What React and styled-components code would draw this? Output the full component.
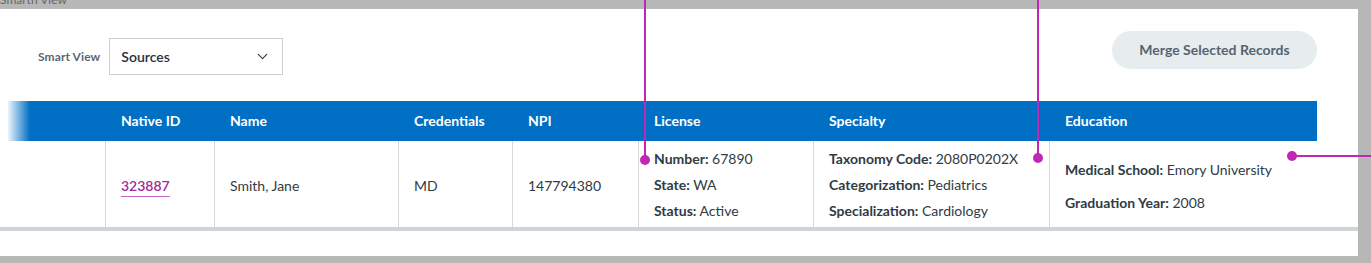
import React from 'react';
import styled, { createGlobalStyle } from 'styled-components';
import { ChevronDown } from 'lucide-react';

const Global = createGlobalStyle`
  html, body { margin: 0; padding: 0; background: #b7b7b7; }
  body {
    font-family: Lato, "Open Sans", "Liberation Sans", sans-serif;
    width: 1371px; height: 263px; overflow: hidden;
  }
  * { box-sizing: border-box; }
`;

const Stage = styled.div`
  position: relative;
  width: 1371px;
  height: 263px;
`;

const TopStrip = styled.div`
  height: 9px;
  overflow: hidden;
  color: #666;
  font-size: 12px;
  line-height: 12px;
`;

const Caption = styled.div`
  margin-top: -6px;
`;

const Panel = styled.div`
  width: 1358px;
  height: 247px;
  background: #fff;
`;

const Toolbar = styled.div`
  display: flex;
  justify-content: space-between;
  align-items: flex-start;
  height: 92px;
  padding: 22px 41px 0 38px;
`;

const ViewPicker = styled.div`
  display: flex;
  align-items: center;
  gap: 9px;
  margin-top: 7px;
`;

const PickerLabel = styled.span`
  font-size: 12px;
  font-weight: 700;
  color: #5b6771;
  letter-spacing: 0.1px;
`;

const Select = styled.div`
  width: 174px;
  height: 37px;
  border: 1px solid #c9d1d5;
  display: flex;
  align-items: center;
  justify-content: space-between;
  padding: 0 11px 1px 11px;
  font-size: 14px;
  font-weight: 600;
  color: #26313a;
`;

const MergeButton = styled.button`
  width: 205px;
  height: 38px;
  border: none;
  border-radius: 19px;
  background: #e7ecef;
  color: #56646f;
  font-family: inherit;
  font-size: 14px;
  font-weight: 700;
  padding: 0 0 2px;
`;

const cols = '105px 109px 184px 114px 126px 175px 236px 268px';

const Table = styled.div`
  border-bottom: 4px solid #cdd5d8;
`;

const HeadRow = styled.div`
  display: grid;
  grid-template-columns: ${cols};
  width: 1317px;
  height: 40px;
  background: linear-gradient(90deg, #fff 0, #fff 8px, rgba(0, 111, 196, 0.08) 8px, #006fc4 30px, #006fc4 100%);
`;

const HeadCell = styled.div`
  display: flex;
  align-items: center;
  padding: 0 0 2px 16px;
  color: #fff;
  font-size: 14px;
  font-weight: 700;
`;

const BodyRow = styled.div`
  display: grid;
  grid-template-columns: ${cols};
  width: 1317px;
  height: 86px;
`;

const Cell = styled.div`
  display: flex;
  flex-direction: column;
  justify-content: center;
  gap: ${p => p.$gap || 0}px;
  padding: ${p => p.$top ?? 2}px 0 0 15px;
  border-left: ${p => (p.$plain ? 'none' : '1px solid #d3dadd')};
  font-size: 14px;
  color: #2f3b45;
  line-height: ${p => p.$lh || 25}px;
`;

const Line = styled.div`
  white-space: nowrap;
`;

const Label = styled.b`
  font-weight: 700;
`;

const IdLink = styled.a`
  color: #a3299e;
  font-weight: 600;
  text-decoration: underline;
  text-decoration-color: #c866c3;
  text-underline-offset: 5px;
  text-decoration-thickness: 1px;
  align-self: flex-start;
`;

const magenta = '#c027b4';

const VLine = styled.div`
  position: absolute;
  left: ${p => p.$x}px;
  top: 0;
  width: 2px;
  height: ${p => p.$h}px;
  background: ${magenta};
`;

const HLine = styled.div`
  position: absolute;
  left: ${p => p.$x}px;
  top: ${p => p.$y}px;
  width: ${p => p.$w}px;
  height: 2px;
  background: ${magenta};
`;

const Dot = styled.div`
  position: absolute;
  left: ${p => p.$x - 5}px;
  top: ${p => p.$y - 5}px;
  width: 10px;
  height: 10px;
  border-radius: 50%;
  background: ${magenta};
`;

export default function App() {
  return (
    <Stage>
      <Global />
      <TopStrip>
        <Caption>Smarth View</Caption>
      </TopStrip>
      <Panel>
        <Toolbar>
          <ViewPicker>
            <PickerLabel>Smart View</PickerLabel>
            <Select>
              <span>Sources</span>
              <ChevronDown size={17} strokeWidth={1.6} color="#2c3740" />
            </Select>
          </ViewPicker>
          <MergeButton>Merge Selected Records</MergeButton>
        </Toolbar>
        <Table>
          <HeadRow>
            <HeadCell />
            <HeadCell>Native ID</HeadCell>
            <HeadCell>Name</HeadCell>
            <HeadCell>Credentials</HeadCell>
            <HeadCell>NPI</HeadCell>
            <HeadCell>License</HeadCell>
            <HeadCell>Specialty</HeadCell>
            <HeadCell>Education</HeadCell>
          </HeadRow>
          <BodyRow>
            <Cell $plain />
            <Cell>
              <IdLink href="#">323887</IdLink>
            </Cell>
            <Cell>Smith, Jane</Cell>
            <Cell>MD</Cell>
            <Cell>147794380</Cell>
            <Cell $top={2} $lh={26}>
              <Line><Label>Number:</Label> 67890</Line>
              <Line><Label>State:</Label> WA</Line>
              <Line><Label>Status:</Label> Active</Line>
            </Cell>
            <Cell $top={2} $lh={26}>
              <Line><Label>Taxonomy Code:</Label> 2080P0202X</Line>
              <Line><Label>Categorization:</Label> Pediatrics</Line>
              <Line><Label>Specialization:</Label> Cardiology</Line>
            </Cell>
            <Cell $gap={8} $top={4}>
              <Line><Label>Medical School:</Label> Emory University</Line>
              <Line><Label>Graduation Year:</Label> 2008</Line>
            </Cell>
          </BodyRow>
        </Table>
      </Panel>
      <VLine $x={644} $h={158} />
      <Dot $x={645} $y={160} />
      <VLine $x={1037} $h={155} />
      <Dot $x={1038} $y={158} />
      <Dot $x={1292} $y={156} />
      <HLine $x={1292} $y={155} $w={79} />
    </Stage>
  );
}
